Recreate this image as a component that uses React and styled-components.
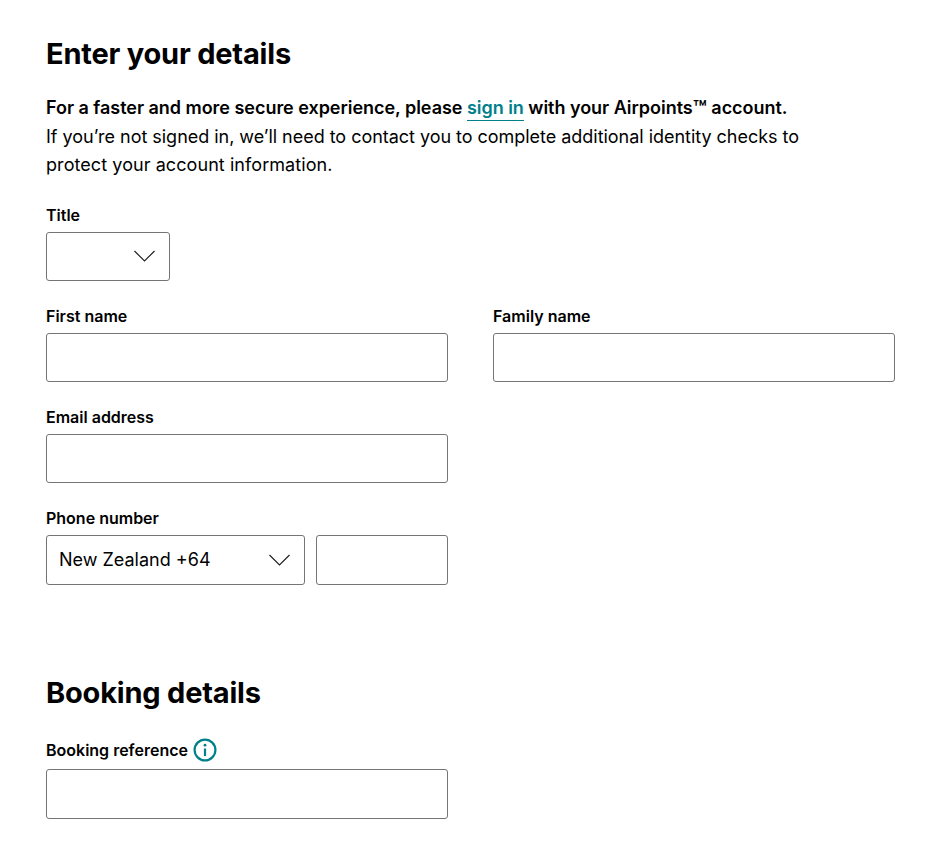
import React from 'react';
import styled, { createGlobalStyle } from 'styled-components';

const GlobalStyle = createGlobalStyle`
  html, body {
    margin: 0;
    padding: 0;
    background: #fff;
  }
  body {
    font-family: 'Inter', 'Liberation Sans', sans-serif;
    color: #000;
  }
`;

const Page = styled.main`
  width: 849px;
  padding: 36px 0 0 46px;
`;

const Heading = styled.h2`
  margin: 0;
  font-size: 29px;
  line-height: 36px;
  font-weight: 700;
  letter-spacing: -0.2px;
`;

const Intro = styled.p`
  margin: 22px 0 0;
  width: 780px;
  font-size: 18px;
  line-height: 28.5px;
  font-weight: 400;
  letter-spacing: -0.03px;
`;

const Strong = styled.strong`
  font-weight: 600;
  letter-spacing: -0.03px;
`;

const SignIn = styled.a`
  color: #00808a;
  text-decoration: none;
  padding-bottom: 2px;
  border-bottom: 1px solid #00808a;
`;

const Trademark = styled.span`
  font-size: 1.25em;
  line-height: 0;
  vertical-align: -0.12em;
`;

const LastLine = styled.span`
  letter-spacing: 0.07px;
`;

const Row = styled.div`
  display: grid;
  grid-template-columns: 402px 402px;
  column-gap: 45px;
  margin-top: ${(p) => p.$top || 23}px;
`;

const Field = styled.div`
  display: flex;
  flex-direction: column;
`;

const Label = styled.label`
  display: flex;
  align-items: center;
  gap: 5px;
  height: 24px;
  margin-bottom: ${(p) => p.$gap || 5}px;
  font-size: 16px;
  font-weight: 600;
`;

const Input = styled.input`
  box-sizing: border-box;
  width: ${(p) => p.$width || 402}px;
  height: ${(p) => p.$height || 49}px;
  border: 1px solid #757575;
  border-radius: 3px;
  background: #fff;
  outline: none;
`;

const SelectBox = styled.div`
  box-sizing: border-box;
  display: flex;
  align-items: center;
  justify-content: space-between;
  width: ${(p) => p.$width}px;
  height: ${(p) => p.$height || 49}px;
  padding: 0 14px 0 12px;
  border: 1px solid #757575;
  border-radius: 3px;
  background: #fff;
  font-size: 18px;
`;

const PhoneRow = styled.div`
  display: flex;
  gap: 11px;
`;

const SectionHeading = styled(Heading)`
  margin-top: 90px;
`;

const InfoButton = styled.span`
  display: inline-flex;
  width: 24px;
  height: 24px;
`;

const Chevron = () => (
  <svg width="21" height="12" viewBox="0 0 21 12" fill="none">
    <path d="M.5 1l10 10 10-10" stroke="#222" strokeWidth="1.2" />
  </svg>
);

const InfoIcon = () => (
  <svg width="24" height="24" viewBox="0 0 24 24" fill="none">
    <circle cx="12" cy="12" r="10.4" stroke="#00808a" strokeWidth="2.2" />
    <circle cx="12" cy="7.2" r="1.4" fill="#00808a" />
    <path d="M12 10.5v7.5" stroke="#00808a" strokeWidth="2.2" />
  </svg>
);

export default function App() {
  return (
    <Page>
      <GlobalStyle />
      <Heading>Enter your details</Heading>
      <Intro>
        <Strong>
          For a faster and more secure experience, please <SignIn href="#">sign in</SignIn> with your Airpoints<Trademark>™</Trademark> account.
        </Strong>
        <br />
        If you’re not signed in, we’ll need to contact you to complete additional identity checks to <LastLine>protect your account information.</LastLine>
      </Intro>

      <Row>
        <Field>
          <Label>Title</Label>
          <SelectBox $width={124}>
            <span />
            <Chevron />
          </SelectBox>
        </Field>
      </Row>

      <Row>
        <Field>
          <Label>First name</Label>
          <Input />
        </Field>
        <Field>
          <Label>Family name</Label>
          <Input />
        </Field>
      </Row>

      <Row>
        <Field>
          <Label>Email address</Label>
          <Input />
        </Field>
      </Row>

      <Row>
        <Field>
          <Label>Phone number</Label>
          <PhoneRow>
            <SelectBox $width={259} $height={50}>
              <span>New Zealand +64</span>
              <Chevron />
            </SelectBox>
            <Input $width={132} $height={50} />
          </PhoneRow>
        </Field>
      </Row>

      <SectionHeading>Booking details</SectionHeading>

      <Row $top={27}>
        <Field>
          <Label $gap={7}>
            Booking reference
            <InfoButton>
              <InfoIcon />
            </InfoButton>
          </Label>
          <Input $height={50} />
        </Field>
      </Row>
    </Page>
  );
}
